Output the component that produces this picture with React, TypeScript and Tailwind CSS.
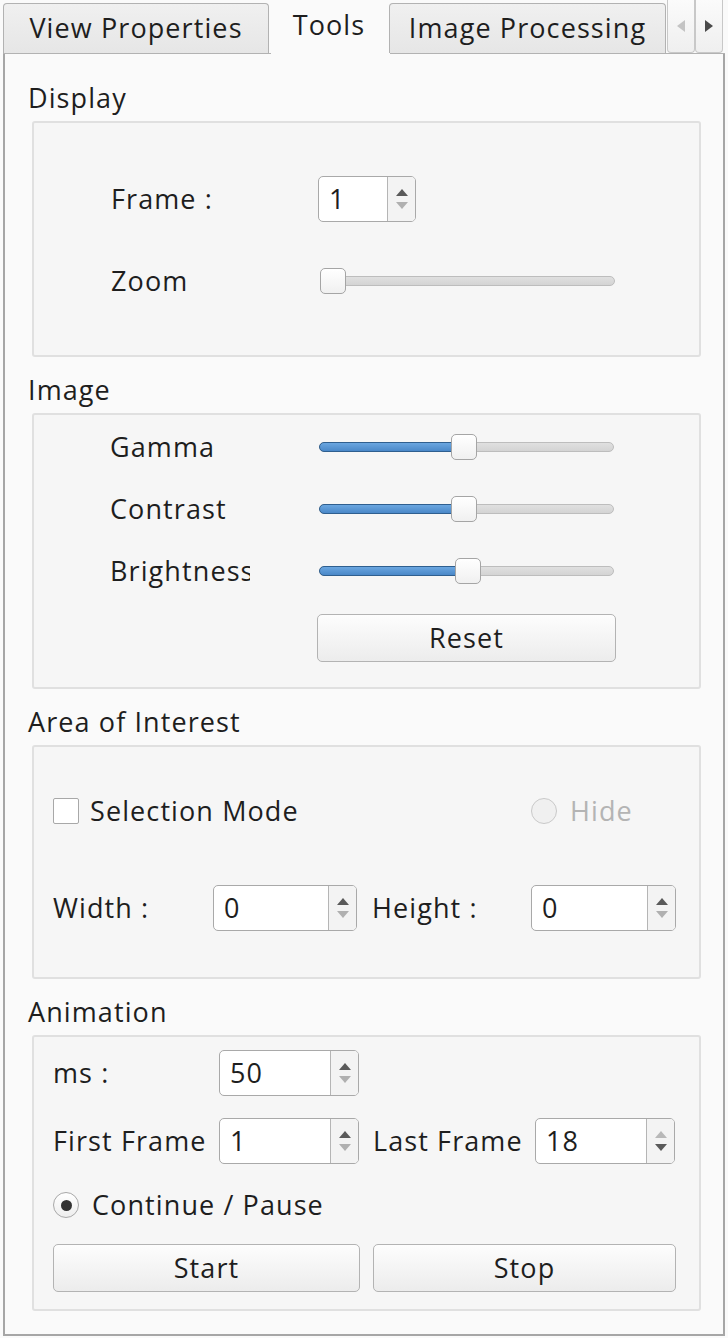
import React from "react";

const FONT = { fontFamily: "'Open Sans', 'Noto Sans', sans-serif" };

function Spin({ value, w, upDark = true, downDark = false }: { value: string; w: string; upDark?: boolean; downDark?: boolean }) {
  return (
    <div className={`flex h-[46px] ${w} rounded-[5px] border border-[#a9a9a9] bg-white overflow-hidden`}>
      <div className="flex-1 flex items-center pl-[10px]">{value}</div>
      <div className="w-[28px] border-l border-[#b5b5b5] bg-[#f3f3f3] flex flex-col items-center justify-center gap-[6px]">
        <svg width="12" height="7" viewBox="0 0 12 7"><path d="M6 0 L12 7 L0 7 Z" fill={upDark ? "#5a5a5a" : "#b8b8b8"} /></svg>
        <svg width="12" height="7" viewBox="0 0 12 7"><path d="M0 0 L12 0 L6 7 Z" fill={downDark ? "#5a5a5a" : "#b0b0b0"} /></svg>
      </div>
    </div>
  );
}

function Slider({ handle, filled }: { handle: number; filled: boolean }) {
  return (
    <div className="relative w-[295px] h-[26px]">
      <div className="absolute left-0 right-0 top-[8px] h-[10px] rounded-full border border-[#bdbdbd] bg-gradient-to-b from-[#e0e0e0] to-[#d4d4d4]" />
      {filled && (
        <div
          className="absolute left-0 top-[8px] h-[10px] rounded-full border border-[#2f5f8f] bg-gradient-to-b from-[#6aa6e0] to-[#4a88c8]"
          style={{ width: handle + 10 }}
        />
      )}
      <div
        className="absolute top-0 w-[26px] h-[26px] rounded-[5px] border border-[#a5a5a5] bg-gradient-to-b from-white to-[#f0f0f0]"
        style={{ left: handle }}
      />
    </div>
  );
}

function Button({ label, w }: { label: string; w: string }) {
  return (
    <div className={`${w} h-[48px] rounded-[5px] border border-[#b3b3b3] bg-gradient-to-b from-[#fdfdfd] to-[#ececec] flex items-center justify-center`}>
      {label}
    </div>
  );
}

function Radio({ checked, disabled }: { checked?: boolean; disabled?: boolean }) {
  return (
    <div
      className={`w-[26px] h-[26px] shrink-0 rounded-full border flex items-center justify-center ${
        disabled ? "border-[#c9c9c9] bg-[#f0f0f0]" : "border-[#a8a8a8] bg-gradient-to-b from-white to-[#eeeeee]"
      }`}
    >
      {checked && <div className="w-[11px] h-[11px] rounded-full bg-[#333]" />}
    </div>
  );
}

function GroupLabel({ text }: { text: string }) {
  return <div className="h-[56px] flex items-end pb-[8px] pl-[23px] leading-[30px]">{text}</div>;
}

function Box({ children, className }: { children: React.ReactNode; className: string }) {
  return (
    <div className={`ml-[27px] w-[669px] rounded-[3px] border-2 border-[#e0e0e0] bg-[#f6f6f6] ${className}`}>{children}</div>
  );
}

export default function App() {
  return (
    <div className="w-[728px] h-[1338px] bg-[#fafafa] relative text-[27px] tracking-[1.1px] text-[#1e1e1e]" style={FONT}>
      {/* tab bar */}
      <div className="flex h-[53px] items-end">
        <div className="ml-[3px] w-[266px] h-[50px] rounded-t-[4px] border border-b-0 border-[#b2b2b2] bg-gradient-to-b from-[#f0f0f0] to-[#e6e6e6] flex items-center justify-center whitespace-nowrap">
          View Properties
        </div>
        <div className="w-[120px] h-[53px] bg-[#fafafa] flex items-center justify-center pb-[2px]">Tools</div>
        <div className="w-[277px] h-[50px] rounded-t-[4px] border border-b-0 border-[#b2b2b2] bg-gradient-to-b from-[#f0f0f0] to-[#e6e6e6] flex items-center justify-center whitespace-nowrap">
          Image Processing
        </div>
        <div className="ml-[1px] self-start w-[28px] h-[53px] rounded-b-[4px] border border-t-0 border-[#c8c8c8] bg-gradient-to-b from-[#fbfbfb] to-[#efefef] flex items-center justify-center">
          <svg width="8" height="12" viewBox="0 0 8 12"><path d="M8 0 L0 6 L8 12 Z" fill="#c4c4c4" /></svg>
        </div>
        <div className="self-start w-[28px] h-[53px] rounded-b-[4px] border border-t-0 border-[#c8c8c8] bg-gradient-to-b from-[#fbfbfb] to-[#efefef] flex items-center justify-center">
          <svg width="8" height="12" viewBox="0 0 8 12"><path d="M0 0 L8 6 L0 12 Z" fill="#4a4a4a" /></svg>
        </div>
      </div>
      {/* pane */}
      <div className="ml-[3px] w-[722px] h-[1283px] border-2 border-[#a6a6a6] border-t-0 relative">
        <div className="absolute top-0 left-[-2px] w-[268px] h-[1px] bg-[#b2b2b2]" />
        <div className="absolute top-0 left-[385px] right-[-2px] h-[1px] bg-[#b2b2b2]" />
        <div className="pt-[12px]">
          <GroupLabel text="Display" />
          <Box className="h-[236px] pt-[53px] pl-[77px] flex flex-col gap-[36px]">
            <div className="flex items-center h-[46px]">
              <div className="w-[207px]">Frame :</div>
              <Spin value="1" w="w-[98px]" />
            </div>
            <div className="flex items-center h-[46px]">
              <div className="w-[209px]">Zoom</div>
              <Slider handle={0} filled={false} />
            </div>
          </Box>

          <GroupLabel text="Image" />
          <Box className="h-[276px] pt-[19px] pl-[76px] flex flex-col">
            <div className="flex flex-col gap-[36px]">
              <div className="flex items-center h-[26px]">
                <div className="w-[209px]"><div className="w-[140px] overflow-hidden whitespace-nowrap">Gamma</div></div>
                <Slider handle={132} filled />
              </div>
              <div className="flex items-center h-[26px]">
                <div className="w-[209px]"><div className="w-[140px] overflow-hidden whitespace-nowrap">Contrast</div></div>
                <Slider handle={132} filled />
              </div>
              <div className="flex items-center h-[26px]">
                <div className="w-[209px]"><div className="w-[140px] overflow-hidden whitespace-nowrap">Brightness</div></div>
                <Slider handle={136} filled />
              </div>
            </div>
            <div className="mt-[30px] ml-[207px]">
              <Button label="Reset" w="w-[299px]" />
            </div>
          </Box>

          <GroupLabel text="Area of Interest" />
          <Box className="h-[234px] pt-[49px] pl-[19px] flex flex-col">
            <div className="flex items-center h-[30px]">
              <div className="w-[478px] flex items-center gap-[11px]">
                <div className="w-[26px] h-[26px] rounded-[2px] border border-[#a8a8a8] bg-white" />
                <span>Selection Mode</span>
              </div>
              <div className="flex items-center gap-[13px] text-[#b4b4b4]">
                <Radio disabled />
                <span>Hide</span>
              </div>
            </div>
            <div className="mt-[59px] flex items-center h-[46px]">
              <div className="w-[160px]">Width :</div>
              <Spin value="0" w="w-[144px]" />
              <div className="ml-[15px] w-[159px] whitespace-nowrap">Height :</div>
              <Spin value="0" w="w-[145px]" />
            </div>
          </Box>

          <GroupLabel text="Animation" />
          <Box className="h-[276px] pt-[13px] pl-[19px] flex flex-col">
            <div className="flex items-center h-[46px]">
              <div className="w-[166px]">ms :</div>
              <Spin value="50" w="w-[140px]" />
            </div>
            <div className="mt-[22px] flex items-center h-[46px]">
              <div className="w-[166px] whitespace-nowrap">First Frame</div>
              <Spin value="1" w="w-[140px]" />
              <div className="ml-[14px] w-[162px] whitespace-nowrap">Last Frame</div>
              <Spin value="18" w="w-[140px]" upDark={false} downDark />
            </div>
            <div className="mt-[26px] flex items-center h-[30px] gap-[13px]">
              <Radio checked />
              <span className="whitespace-nowrap">Continue / Pause</span>
            </div>
            <div className="mt-[24px] flex gap-[13px]">
              <Button label="Start" w="w-[307px]" />
              <Button label="Stop" w="w-[303px]" />
            </div>
          </Box>
        </div>
      </div>
    </div>
  );
}
